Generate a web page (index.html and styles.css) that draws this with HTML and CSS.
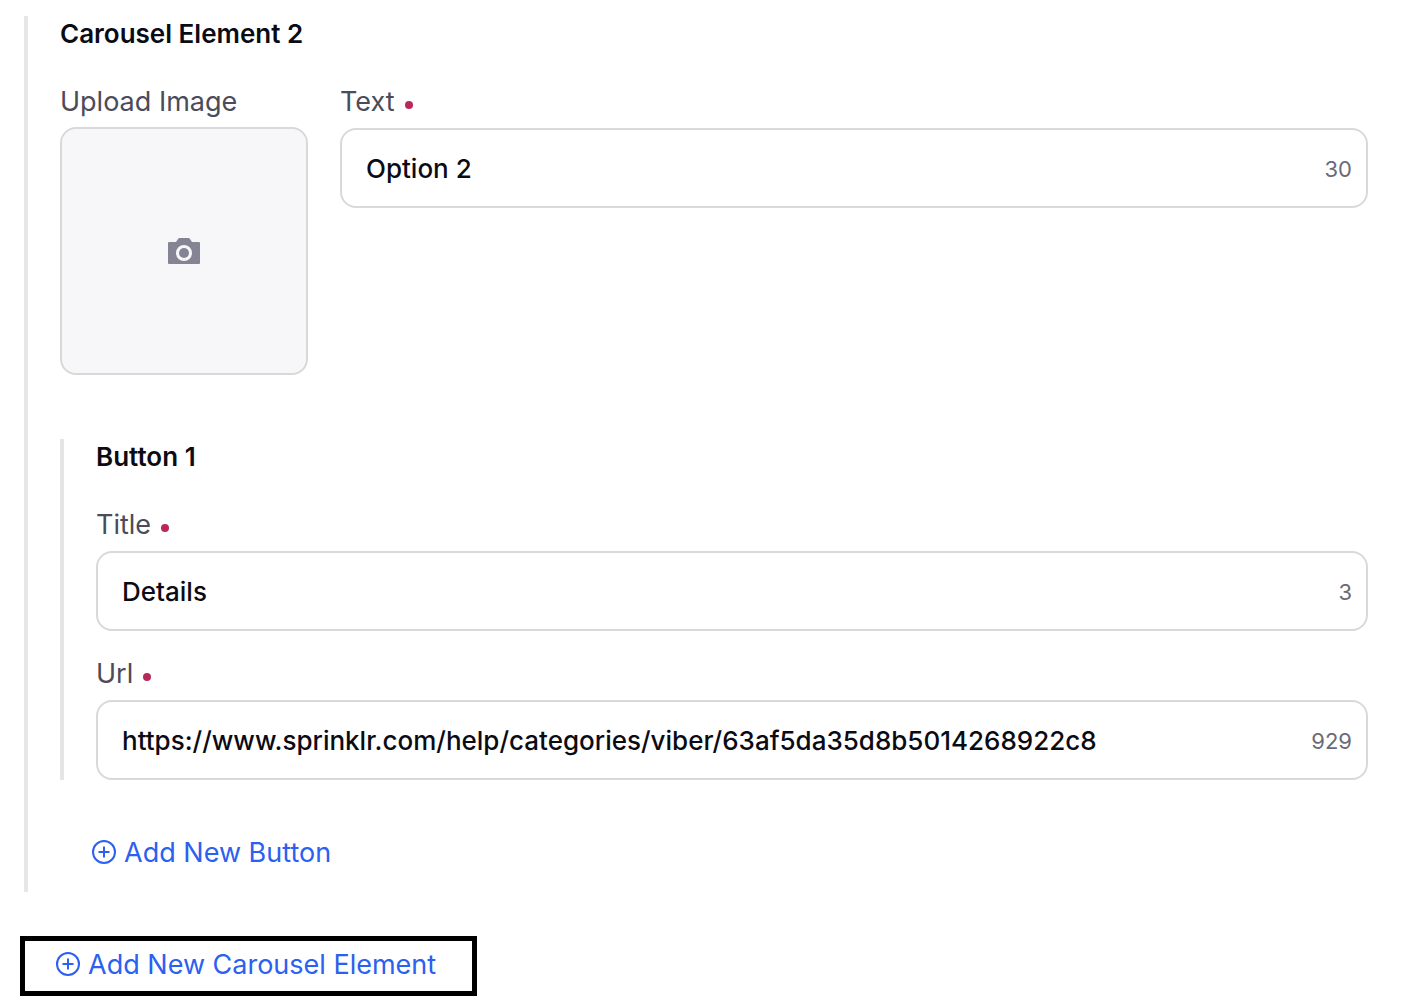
FILE: index.html
```html
<!doctype html>
<html lang="en">
<head>
<meta charset="UTF-8">
<meta name="viewport" content="width=device-width, initial-scale=1">
<title>Carousel Element</title>
<link rel="stylesheet" href="styles.css">
</head>
<body>
<form class="carousel_form">
  <section class="element">
    <h2 class="heading">Carousel Element 2</h2>
    <div class="element_row">
      <div class="upload">
        <span class="label" id="upload_label">Upload Image</span>
        <button type="button" class="upload_box" aria-labelledby="upload_label">
          <svg class="camera" viewBox="0 0 32 26" aria-hidden="true">
            <path fill="currentColor" fill-rule="evenodd" d="M11.5 0h9a1.5 1.5 0 0 1 1.3.8L24 4h7a1 1 0 0 1 1 1v20a1 1 0 0 1-1 1H1a1 1 0 0 1-1-1V5a1 1 0 0 1 1-1h7l2.200-3.200A1.500 1.500 0 0 1 11.500 0zM16 7a8 8 0 1 0 0 16a8 8 0 0 0 0-16z"/>
            <circle cx="16" cy="15" r="5" fill="currentColor"/>
          </svg>
        </button>
      </div>
      <div class="field">
        <label class="label required" for="text">Text</label>
        <div class="input_box">
          <input class="input" type="text" id="text" value="Option 2">
          <span class="count">30</span>
        </div>
      </div>
    </div>

    <section class="button_group">
      <h3 class="heading">Button 1</h3>
      <div class="fields">
        <div class="field">
          <label class="label required" for="title">Title</label>
          <div class="input_box">
            <input class="input" type="text" id="title" value="Details">
            <span class="count">3</span>
          </div>
        </div>
        <div class="field">
          <label class="label required" for="url">Url</label>
          <div class="input_box">
            <input class="input" type="text" id="url" value="https://www.sprinklr.com/help/categories/viber/63af5da35d8b5014268922c8">
            <span class="count">929</span>
          </div>
        </div>
      </div>
    </section>

    <button type="button" class="add_btn add_button">
      <svg class="plus" viewBox="0 0 24 24" aria-hidden="true">
        <circle cx="12" cy="12" r="11"/>
        <path d="M12 6.500v11M6.500 12h11"/>
      </svg>
      Add New Button
    </button>
  </section>

  <div class="highlight">
    <button type="button" class="add_btn">
      <svg class="plus" viewBox="0 0 24 24" aria-hidden="true">
        <circle cx="12" cy="12" r="11"/>
        <path d="M12 6.500v11M6.500 12h11"/>
      </svg>
      Add New Carousel Element
    </button>
  </div>
</form>
</body>
</html>
```
FILE: styles.css
```css
* {
    box-sizing: border-box;
}
body {
    margin: 0;
    background-color: #fff;
    color: #0b0b14;
    font-family: Inter, "Liberation Sans", sans-serif;
}
button, input {
    font-family: inherit;
}
.carousel_form {
    padding: 16px 44px 12px 20px;
}
.element {
    margin-left: 4px;
    padding-left: 32px;
    padding-bottom: 20px;
    border-left: 4px solid #e6e6e6;
}
.heading {
    margin: 0 0 32px;
    font-size: 26px;
    font-weight: 600;
    line-height: 36px;
}
.element_row {
    display: grid;
    grid-template-columns: 248px 1fr;
    gap: 32px;
}
.upload, .field {
    display: flex;
    flex-direction: column;
}
.upload {
    gap: 7px;
}
.field {
    gap: 8px;
}
.label {
    color: #4b4b5a;
    font-size: 27px;
    line-height: 36px;
}
.required::after {
    content: "";
    display: inline-block;
    width: 8px;
    height: 8px;
    margin-left: 10px;
    border-radius: 50%;
    background-color: #b8285a;
    vertical-align: 2px;
}
.upload_box {
    display: flex;
    align-items: center;
    justify-content: center;
    width: 100%;
    aspect-ratio: 1;
    padding: 0;
    border: 2px solid #d9d9d9;
    border-radius: 16px;
    background-color: #f7f7fa;
    color: #858494;
    cursor: pointer;
}
.camera {
    width: 32px;
    height: 26px;
}
.input_box {
    display: flex;
    align-items: center;
    height: 80px;
    padding: 0 14px 0 24px;
    border: 2px solid #d9d9d9;
    border-radius: 16px;
    background-color: #fff;
}
.input {
    flex: 1;
    min-width: 0;
    height: 100%;
    padding: 0;
    border: 0;
    outline: none;
    background: none;
    color: #0b0b14;
    font-size: 26px;
    font-weight: 500;
}
.count {
    padding-top: 2px;
    color: #6b6a78;
    font-size: 22px;
}
.button_group {
    margin-top: 64px;
    padding-left: 32px;
    border-left: 4px solid #e5e5e8;
}
.fields {
    display: grid;
    gap: 25px;
}
.add_btn {
    display: flex;
    align-items: center;
    gap: 8px;
    height: 40px;
    padding: 0;
    border: 0;
    background: none;
    color: #2b60f0;
    font-size: 27px;
    white-space: nowrap;
    cursor: pointer;
}
.add_button {
    margin-top: 52px;
    margin-left: 32px;
}
.plus {
    width: 24px;
    height: 24px;
    fill: none;
    stroke: currentColor;
    stroke-width: 2;
}
.highlight {
    width: fit-content;
    margin-top: 44px;
    padding: 3px 36px 7px 31px;
    border: 5px solid #000;
}
```
